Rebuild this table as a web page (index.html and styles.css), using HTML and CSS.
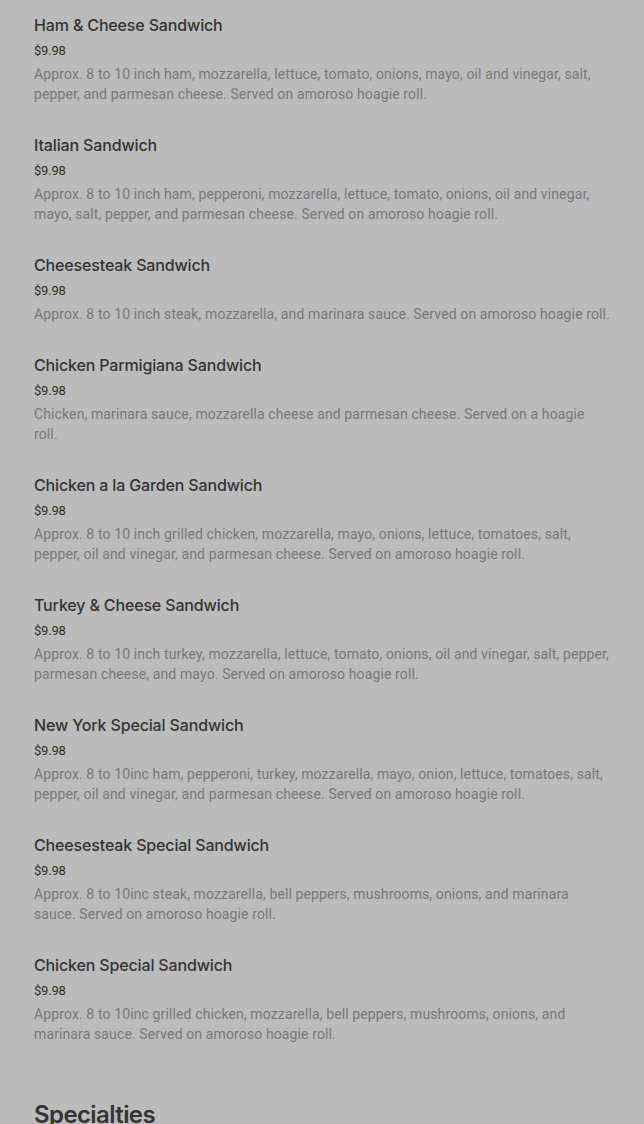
FILE: index.html
```html
<!DOCTYPE html>
<html>
<head>
<meta charset="utf-8">
<link rel="stylesheet" href="styles.css">
</head>
<body>
<main class="menu">
  <section class="items">
    <article class="item">
      <h3 class="item-title">Ham &amp; Cheese Sandwich</h3>
      <div class="item-price">$9.98</div>
      <p class="item-desc">Approx. 8 to 10 inch ham, mozzarella, lettuce, tomato, onions, mayo, oil and vinegar, salt, pepper, and parmesan cheese. Served on amoroso hoagie roll.</p>
    </article>
    <article class="item">
      <h3 class="item-title">Italian Sandwich</h3>
      <div class="item-price">$9.98</div>
      <p class="item-desc">Approx. 8 to 10 inch ham, pepperoni, mozzarella, lettuce, tomato, onions, oil and vinegar, mayo, salt, pepper, and parmesan cheese. Served on amoroso hoagie roll.</p>
    </article>
    <article class="item">
      <h3 class="item-title">Cheesesteak Sandwich</h3>
      <div class="item-price">$9.98</div>
      <p class="item-desc">Approx. 8 to 10 inch steak, mozzarella, and marinara sauce. Served on amoroso hoagie roll.</p>
    </article>
    <article class="item">
      <h3 class="item-title">Chicken Parmigiana Sandwich</h3>
      <div class="item-price">$9.98</div>
      <p class="item-desc">Chicken, marinara sauce, mozzarella cheese and parmesan cheese. Served on a hoagie roll.</p>
    </article>
    <article class="item">
      <h3 class="item-title">Chicken a la Garden Sandwich</h3>
      <div class="item-price">$9.98</div>
      <p class="item-desc">Approx. 8 to 10 inch grilled chicken, mozzarella, mayo, onions, lettuce, tomatoes, salt, pepper, oil and vinegar, and parmesan cheese. Served on amoroso hoagie roll.</p>
    </article>
    <article class="item">
      <h3 class="item-title">Turkey &amp; Cheese Sandwich</h3>
      <div class="item-price">$9.98</div>
      <p class="item-desc">Approx. 8 to 10 inch turkey, mozzarella, lettuce, tomato, onions, oil and vinegar, salt, pepper, parmesan cheese, and mayo. Served on amoroso hoagie roll.</p>
    </article>
    <article class="item">
      <h3 class="item-title">New York Special Sandwich</h3>
      <div class="item-price">$9.98</div>
      <p class="item-desc">Approx. 8 to 10inc ham, pepperoni, turkey, mozzarella, mayo, onion, lettuce, tomatoes, salt, pepper, oil and vinegar, and parmesan cheese. Served on amoroso hoagie roll.</p>
    </article>
    <article class="item">
      <h3 class="item-title">Cheesesteak Special Sandwich</h3>
      <div class="item-price">$9.98</div>
      <p class="item-desc">Approx. 8 to 10inc steak, mozzarella, bell peppers, mushrooms, onions, and marinara sauce. Served on amoroso hoagie roll.</p>
    </article>
    <article class="item">
      <h3 class="item-title">Chicken Special Sandwich</h3>
      <div class="item-price">$9.98</div>
      <p class="item-desc">Approx. 8 to 10inc grilled chicken, mozzarella, bell peppers, mushrooms, onions, and marinara sauce. Served on amoroso hoagie roll.</p>
    </article>
  </section>
  <h2 class="section-title">Specialties</h2>
</main>
</body>
</html>
```

FILE: styles.css
```css
html, body {
  margin: 0;
  padding: 0;
  background: #bbbbbb;
}
body {
  font-family: "Roboto", "Liberation Sans", sans-serif;
  overflow: hidden;
  height: 1124px;
}
.menu {
  padding: 15px 33px 0 34px;
}
.items {
  display: flex;
  flex-direction: column;
  gap: 31px;
}
.item {
  display: flex;
  flex-direction: column;
}
.item-title {
  margin: 0;
  font-family: "Inter", "Roboto", sans-serif;
  font-size: 16px;
  line-height: 20px;
  font-weight: 500;
  letter-spacing: -0.15px;
  color: #333333;
}
.item-price {
  margin-top: 6px;
  font-size: 13px;
  line-height: 20px;
  color: #2e2e2e;
  letter-spacing: -0.2px;
}
.item-desc {
  margin: 3px 0 0;
  font-size: 14px;
  line-height: 20px;
  letter-spacing: 0.12px;
  color: #777777;
}
.section-title {
  margin: 55px 0 0;
  font-family: "Inter", "Roboto", sans-serif;
  font-size: 24px;
  line-height: 32px;
  font-weight: 600;
  letter-spacing: -0.6px;
  color: #333333;
}
```
